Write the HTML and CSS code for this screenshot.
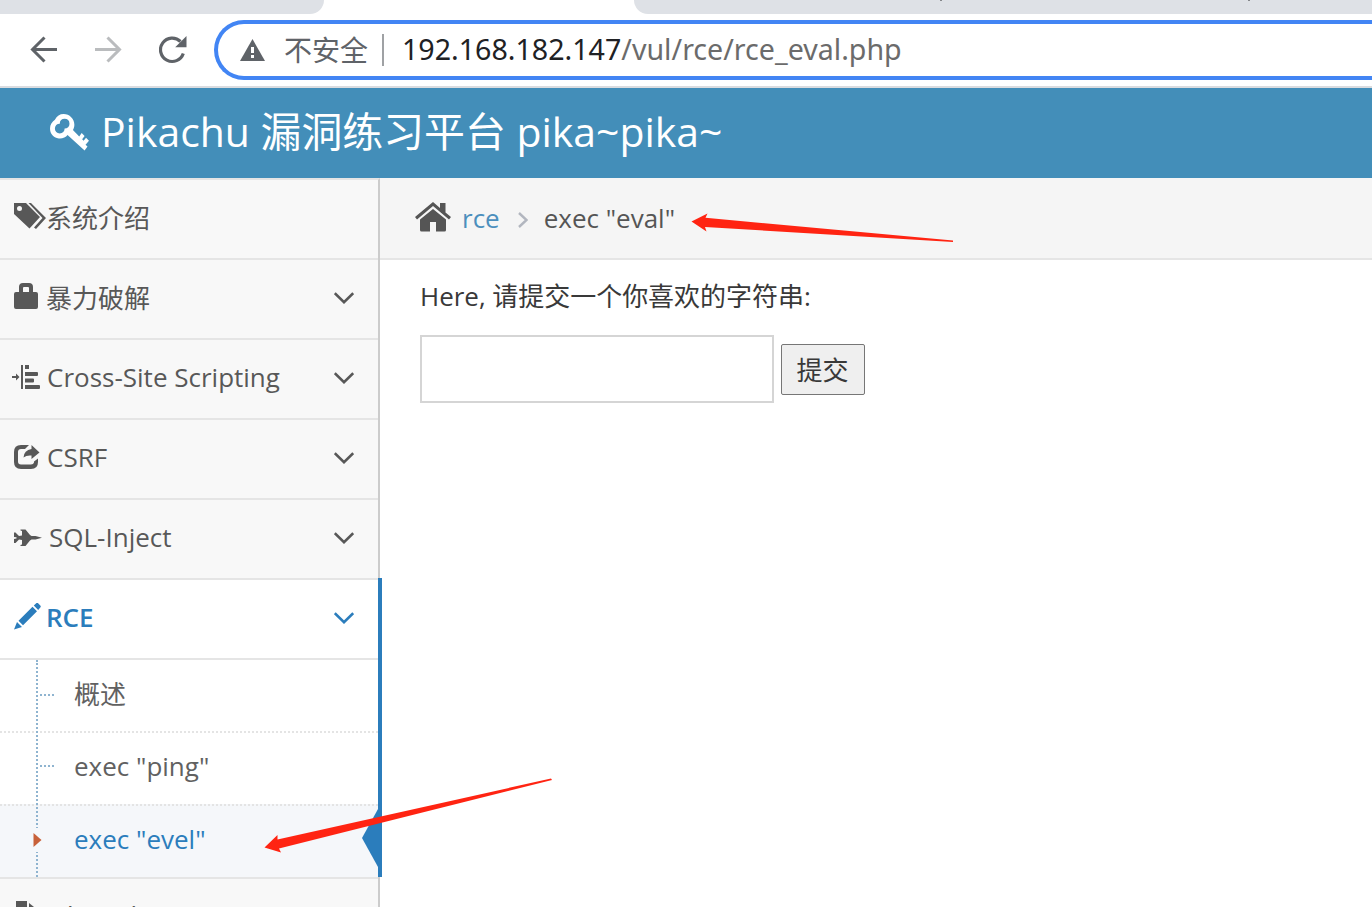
FILE: index.html
```html
<!DOCTYPE html>
<html lang="zh">
<head>
    <meta charset="UTF-8">
    <meta name="viewport" content="width=device-width, initial-scale=1.0">
    <title>Pikachu</title>
    <link rel="stylesheet" href="styles.css">
</head>
<body>
    <div class="browser">
        <div class="tabs">
            <div class="tab tab-left"></div>
            <div class="tab tab-right"><i></i><i></i></div>
        </div>
        <div class="toolbar">
            <svg class="nav-icon back" viewBox="0 0 28 28"><path d="M27 13.500H3M14.500 1.500L2.500 13.500l12 12"/></svg>
            <svg class="nav-icon forward" viewBox="0 0 28 28"><path d="M1 13.500h24M13.500 1.500l12 12-12 12"/></svg>
            <svg class="nav-icon reload" viewBox="0 0 28 28"><path d="M24.300 17.500A11.700 11.700 0 1 1 21.500 5.500"/><path class="fill" d="M27.500 0v11.300H16.200z"/></svg>
            <div class="address">
                <svg class="warn" viewBox="0 0 25 22"><path d="M12.500 0L25 22H0z"/><path class="mark" d="M11 8h3v6h-3zM11 16h3v3h-3z"/></svg>
                <span class="unsafe">不安全</span>
                <span class="divider"></span>
                <span class="url"><b>192.168.182.147</b>/vul/rce/rce_eval.php</span>
            </div>
        </div>
    </div>

    <header class="navbar">
        <svg class="key" viewBox="0 0 40 38"><path fill-rule="evenodd" d="M14 0C20 0 25 5 25 11c0 2-.6 4-1.500 5.500L30 23l2.500-3.500 3 3L33 26l1.500 1.500 2.500-3 3 3-3.500 4 2 2-3 4L18 21.500C16 24 12 26 8 25c-5-1-8-5-8-10C0 11 2 8 5 6c2-4 5-6 9-6zM15 5c-3 0-5 2-5 5-3 0-5 2-5 5s2 5 5 5 5-2 5-5c3 0 5-2 5-5s-2-5-5-5z"/></svg>
        <h1>Pikachu 漏洞练习平台 pika~pika~</h1>
    </header>

    <div class="main">
        <nav class="sidebar">
            <a class="item">
                <svg class="icon tags" viewBox="0 0 32 26"><path fill-rule="evenodd" d="M0 0h12l14 14L15.500 25.500 0 11zM5.500 3a2.500 2.500 0 1 0 0 5 2.500 2.500 0 0 0 0-5z"/><path d="M14.500 0H17l15 15-10 11-2-1.500L28.500 15z"/></svg>
                <span>系统介绍</span>
            </a>
            <a class="item">
                <svg class="icon lock" viewBox="0 0 24 26"><path fill-rule="evenodd" d="M5 9V4q0-4 4-4h6q4 0 4 4v5h3q2 0 2 2v13q0 2-2 2H2q-2 0-2-2V11q0-2 2-2zM9 9h6V5q0-1-1-1h-4q-1 0-1 1z"/></svg>
                <span>暴力破解</span>
                <svg class="arrow" viewBox="0 0 20 12"><path d="M.8 1.200L10 10.200l9.200-9"/></svg>
            </a>
            <a class="item">
                <svg class="icon indent" viewBox="0 0 28 24"><path d="M0 11h4V8.500L7.500 12 4 15.500V13H0zM9 0h2v24H9zM13 0h4v4h-4zM13 7h12q1 0 1 1v2q0 1-1 1H13zM13 13.500h8q1 0 1 1v2q0 1-1 1h-8zM13 20h14q1 0 1 1v2q0 1-1 1H13z"/></svg>
                <span>Cross-Site Scripting</span>
                <svg class="arrow" viewBox="0 0 20 12"><path d="M.8 1.200L10 10.200l9.200-9"/></svg>
            </a>
            <a class="item">
                <svg class="icon share" viewBox="0 0 26 24"><path d="M15 0L11 4H7Q4 4 4 7v9.500Q4 19.500 7 19.500h10q2.500 0 3-2V16.500L24 13.500V17q0 7-7 7H7q-7 0-7-7V7q0-7 7-7z"/><path d="M17.500 0L25.500 7.500 17.500 14V10.500q-5-.5-8 2Q10 5 17.500 4z"/></svg>
                <span>CSRF</span>
                <svg class="arrow" viewBox="0 0 20 12"><path d="M.8 1.200L10 10.200l9.200-9"/></svg>
            </a>
            <a class="item">
                <svg class="icon jet" viewBox="0 0 28 18"><path d="M0 3.500l1.500 0L5 7l3-.5V2L6.500 1.500V.5H11.500L16 6l1.500 1h4L28 8.800l-6.500 1.700h-4L16 11.500 11.500 17H6.500V16L8 15.500v-4.500L5 10.500 1.500 14H0v-4l2.500-.5V8.300L0 8z"/></svg>
                <span>SQL-Inject</span>
                <svg class="arrow" viewBox="0 0 20 12"><path d="M.8 1.200L10 10.200l9.200-9"/></svg>
            </a>
            <div class="open">
                <a class="item active">
                    <svg class="icon pencil" viewBox="0 0 27 27"><path d="M18.500 3.800L23 8.300 9 22.200 4.500 17.700zM22.500 0q.7-.5 1.400 0L26.500 2.800q.5.700 0 1.400L24.200 7 19.800 2.600zM3 19l5 5L0 26.500z"/></svg>
                    <span>RCE</span>
                    <svg class="arrow" viewBox="0 0 20 12"><path d="M.8 1.200L10 10.200l9.200-9"/></svg>
                </a>
                <ul class="submenu">
                    <li><i></i>概述</li>
                    <li><i></i>exec "ping"</li>
                    <li class="current">exec "evel"
                        <svg class="caret" viewBox="0 0 10 24"><path d="M.5 5l8 7-8 7z"/></svg>
                        <svg class="notch" viewBox="0 0 16 58"><path d="M16 0v58L0 29z"/></svg>
                    </li>
                </ul>
            </div>
            <a class="item">
                <svg class="icon file" viewBox="0 0 22 26"><path d="M0 0h11v6h11v20H0zM13 2l5 4h-5z"/></svg>
                <span>File Inclusion</span>
            </a>
        </nav>

        <div class="content">
            <div class="breadcrumb">
                <svg class="home" viewBox="0 0 36 30"><path d="M18 0l7 6V1h5.500v9.500L36 15l-2 2.500L18 4 2 17.500 0 15z"/><path d="M18 7l13 10.500V28q0 1.500-1.500 1.500H21V20h-6v9.500H6.500Q5 29.500 5 28V17.500z"/></svg>
                <a>rce</a>
                <svg class="sep" viewBox="0 0 10 16"><path d="M1 1l7.500 7L1 15"/></svg>
                <span>exec "eval"</span>
            </div>
            <form class="eval-form">
                <p>Here, 请提交一个你喜欢的字符串:</p>
                <div class="row">
                    <input type="text">
                    <button type="button">提交</button>
                </div>
            </form>
        </div>
    </div>

    <!-- red hand-drawn arrows over the page -->
    <svg class="marks" viewBox="0 0 1372 907">
        <path d="M691.500 221.500L707.500 213.500 705.500 217.800 953 240.500V242L705 227 706.500 231.500z"/>
        <path d="M264.500 847.500L277.500 835 277.500 839.500 551 778.500 552 780 279 848.500 281 852.500z"/>
    </svg>
</body>
</html>
```
FILE: styles.css
```css
* { margin: 0; padding: 0; box-sizing: border-box; }
body { width: 100vw; height: 100vh; overflow: hidden; background: #fff; color: #393939;
       font-family: "Open Sans", "Noto Sans CJK SC", sans-serif; font-size: 26px; }
svg { display: block; flex: none; }

.browser { height: 88px; border-bottom: 2px solid #dadce0; }
.tabs { height: 14px; display: flex; justify-content: space-between; }
.tab { background: #dee1e6; }
.tab-left { width: 324px; border-bottom-right-radius: 14px; }
.tab-right { width: 738px; padding-left: 306px; display: flex; gap: 306px; border-bottom-left-radius: 14px; }
.tab-right i { width: 2px; height: 1px; background: #85878b; }
.toolbar { height: 72px; padding: 6px 0 0 30px; display: flex; align-items: flex-start; }
.nav-icon { width: 28px; height: 28px; margin-top: 16px; fill: none; stroke: #5f6368; stroke-width: 3; }
.forward { margin-left: 36px; stroke: #babcbe; }
.reload { margin-left: 37px; stroke-width: 3.2; }
.nav-icon .fill { fill: #5f6368; stroke: none; }
.address { flex: 1; height: 60px; margin-left: 27px; padding-left: 22px; border: 4px solid #4285f4;
           border-right: 0; border-radius: 30px 0 0 30px; display: flex; align-items: center; }
.warn { width: 25px; height: 22px; fill: #5f6368; }
.warn .mark { fill: #fff; }
.unsafe { margin-left: 19px; font-size: 28px; line-height: 40px; color: #5f6368; }
.divider { width: 2px; height: 32px; margin: 0 18px 0 14px; background: #9fa1a4; }
.url { padding-bottom: 2px; font-family: "Noto Sans", sans-serif; font-size: 28.6px; line-height: 40px; color: #6b6b6b; white-space: nowrap; }
.url b { font-weight: normal; color: #202124; }

.navbar { height: 90px; padding: 0 0 4px 50px; display: flex; align-items: center; background: #438eb9; color: #fff; }
.key { width: 39px; height: 37px; fill: #fff; margin-top: 2px; }
.navbar h1 { margin-left: 12px; font-size: 40.900px; font-weight: normal; line-height: 60px; white-space: nowrap; }

.main { display: flex; height: 729px; overflow: hidden; }
.sidebar { width: 380px; flex: none; border-right: 2px solid #ccc; border-top: 2px solid #e5e5e5; background: #f8f8f8; }
.item { height: 80px; padding: 0 24px 4px 14px; display: flex; align-items: center; border-bottom: 2px solid #e5e5e5;
        color: #585858; white-space: nowrap; }
.icon { fill: currentColor; margin-right: 8px; }
.tags { width: 32px; height: 26px; margin: 0 0 2px; }
.lock { width: 24px; height: 26px; margin: 0 8px 2px 0; }
.indent { width: 28px; height: 24px; margin-left: -2px; margin-right: 7px; }
.share { width: 26px; height: 24px; margin-right: 7px; }
.jet { width: 28px; height: 18px; margin: 2px 7px 0 0; }
.pencil { width: 27px; height: 27px; margin: 0 6px 2px 0; }
.file { width: 22px; height: 26px; margin: 0 9px 2px 2px; }
.arrow { width: 20px; height: 12px; margin: 2px 0 0 auto; fill: none; stroke: currentColor; stroke-width: 2.600; }

.open { width: 382px; margin-top: -2px; border-right: 4px solid #2b7dbc; position: relative; }
.active { height: 82px; border-top: 2px solid #e5e5e5; background: #fff; color: #2b7dbc; font-weight: 600; }
.active span { margin-left: -1px; }
.submenu { list-style: none; background: #fff; position: relative; }
.submenu::before { content: ""; position: absolute; z-index: 1; left: 36px; top: 0; bottom: 0; border-left: 2px dotted #8fb4d0; }
.submenu li { height: 73px; padding-left: 74px; line-height: 66px; color: #616161; border-top: 2px dotted #e4e4e4; position: relative; }
.submenu li:first-child { height: 71px; line-height: 68px; border-top: 0; }
.submenu i { position: absolute; left: 40px; top: 32px; width: 14px; border-top: 2px dotted #8fb4d0; }
.submenu li:first-child i { top: 34px; }
.submenu .current { background: #f5f7fa; color: #2b7dbc; }
.caret { position: absolute; z-index: 2; left: 33px; top: 22px; width: 10px; height: 24px; background: #f5f7fa; fill: #c86139; }
.notch { position: absolute; right: 0; top: 3px; width: 16px; height: 58px; fill: #2b7dbc; }
.open + .item { border-top: 2px solid #e5e5e5; height: 80px; }

.content { flex: 1; }
.breadcrumb { height: 82px; padding: 0 0 2px 35px; display: flex; align-items: center; background: #f5f5f5;
              border-bottom: 2px solid #e5e5e5; color: #555; }
.home { width: 36px; height: 30px; fill: #555; }
.breadcrumb a { margin-left: 11px; padding-top: 2px; color: #4c8fbd; }
.breadcrumb span { padding-top: 2px; }
.sep { width: 10px; height: 16px; margin: 6px 16px 0 18px; fill: none; stroke: #b2b6bf; stroke-width: 2.400; }
.eval-form { padding: 16px 40px; }
.eval-form p { line-height: 40px; letter-spacing: -.03px; }
.row { display: flex; align-items: center; margin-top: 19px; }
.row input { width: 354px; height: 68px; border: 2px solid #d5d5d5; background: #fff; }
.row button { width: 84px; height: 51px; margin-left: 7px; padding: 2px 1px 0 0; border: 1px solid #767676; border-radius: 2px; background: #efefef;
              font: inherit; line-height: 46px; color: #393939; }

.marks { position: absolute; left: 0; top: 0; z-index: 5; width: 1372px; height: 907px; fill: #ff2412; pointer-events: none; }
```
